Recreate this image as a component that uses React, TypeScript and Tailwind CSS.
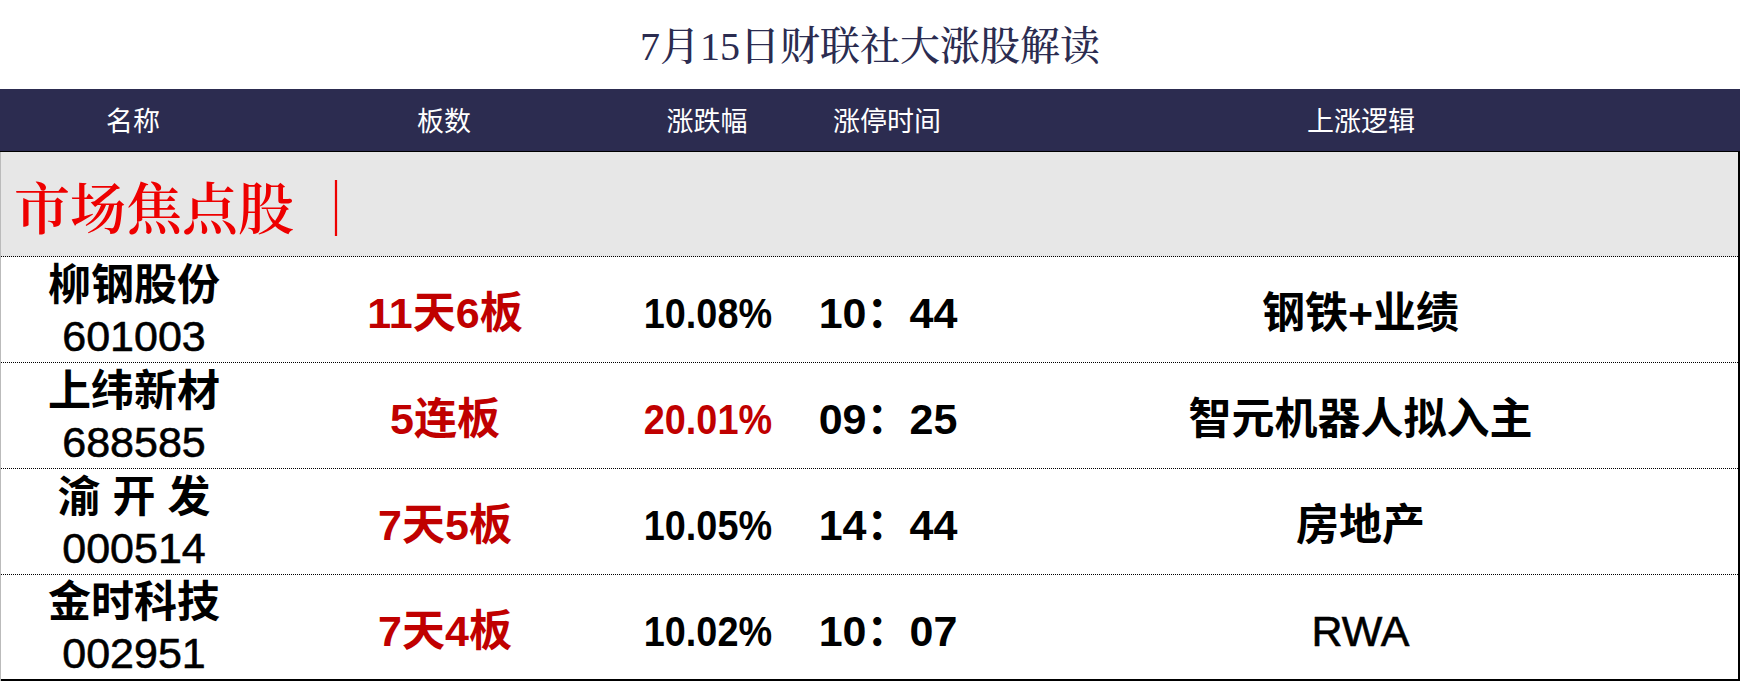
import React from "react";

const rows = [
  { name: "柳钢股份", code: "601003", boards: "11天6板", pct: "10.08%", pctRed: false, time: "10：44", logic: "钢铁+业绩" },
  { name: "上纬新材", code: "688585", boards: "5连板", pct: "20.01%", pctRed: true, time: "09：25", logic: "智元机器人拟入主" },
  { name: "渝 开 发", code: "000514", boards: "7天5板", pct: "10.05%", pctRed: false, time: "14：44", logic: "房地产" },
  { name: "金时科技", code: "002951", boards: "7天4板", pct: "10.02%", pctRed: false, time: "10：07", logic: "RWA" },
];

const headers = ["名称", "板数", "涨跌幅", "涨停时间", "上涨逻辑"];

const sans = { fontFamily: '"Liberation Sans", "Noto Sans CJK SC", sans-serif' };
const serif = { fontFamily: '"Liberation Serif", "Noto Serif CJK SC", "Noto Sans CJK SC", serif' };

const cols = "grid grid-cols-[266px_356px_170px_190px_1fr]";

export default function App() {
  return (
    <div className="w-[1740px] h-[682px] bg-white overflow-hidden" style={sans}>
      <div className="h-[89px] flex items-center justify-center pt-[4px]">
        <h1 className="text-[40px] leading-none text-[#2b2c50] font-medium" style={serif}>
          7月15日财联社大涨股解读
        </h1>
      </div>

      <div className={`${cols} h-[63px] bg-[#2c2c50] border-b border-black text-white text-[27px] items-center`}>
        {headers.map((h) => (
          <div key={h} className="text-center leading-none pt-[4px]">
            {h}
          </div>
        ))}
      </div>

      <div className="border-r-2 border-l border-r-black border-l-[#bbbbbb]">
        <div className="h-[105px] bg-[#e7e7e7] border-b border-dotted border-black flex items-center pl-[13px] pt-[12px]">
          <span className="text-[56px] leading-none text-[#ee0000] font-semibold" style={serif}>
            市场焦点股 ｜
          </span>
        </div>

        {rows.map((r, i) => (
          <div
            key={r.code}
            className={`${cols} h-[106px] items-center text-black ${
              i === rows.length - 1 ? "border-b-2 border-solid border-black" : "border-b border-dotted border-black"
            }`}
          >
            <div className="flex flex-col items-center text-[43px] leading-[51px] pt-[2px]">
              <span className="font-bold whitespace-pre">{r.name}</span>
              <span className="font-normal [-webkit-text-stroke:0.6px_black]">{r.code}</span>
            </div>
            <div className="text-center text-[43px] leading-none font-bold text-[#c00000] pt-[8px]">{r.boards}</div>
            <div className="text-center text-[43px] leading-none pt-[8px]">
              <span
                className={`inline-block scale-x-[0.88] font-bold ${r.pctRed ? "text-[#c00000]" : "text-black"}`}
              >
                {r.pct}
              </span>
            </div>
            <div className="text-center text-[43px] leading-none font-bold pt-[8px]">{r.time}</div>
            <div
              className={`text-center text-[43px] leading-none pt-[8px] ${
                r.logic === "RWA" ? "font-normal [-webkit-text-stroke:0.6px_black]" : "font-bold"
              }`}
            >
              {r.logic}
            </div>
          </div>
        ))}
      </div>
    </div>
  );
}
